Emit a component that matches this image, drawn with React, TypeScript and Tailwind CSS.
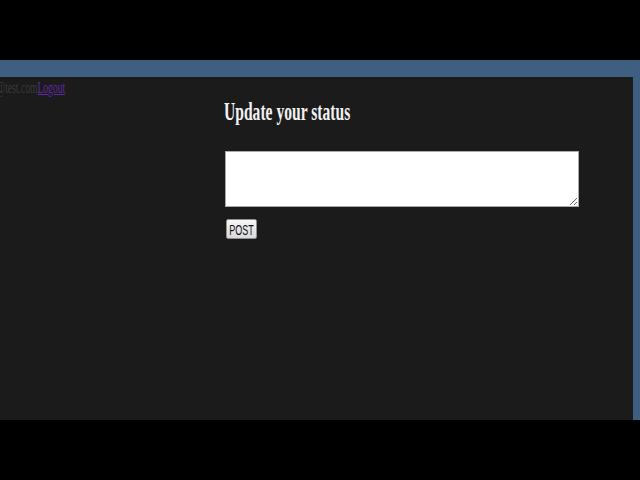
import React, { useState } from 'react';

// The page looks squeezed sideways, so text runs get scale-x-[0.6]
const App: React.FC = () => {
  const [status, setStatus] = useState('');

  return (
    <div className="w-[640px] h-[480px] bg-black flex flex-col overflow-hidden font-['Liberation_Serif',serif]">
      {/* top black band */}
      <div className="h-[60px] shrink-0" />

      {/* blue frame */}
      <div className="h-[360px] shrink-0 bg-[#3e5f80] pt-[17px] pr-[7px] flex">
        <div className="flex-1 bg-[#1b1b1b] pt-[2px] flex flex-col">
          {/* user line */}
          <div className="h-[18px] whitespace-nowrap overflow-hidden text-[16px] leading-[18px] text-[#3a3a3a]">
            <span className="inline-block origin-left scale-x-[0.6] -ml-[17px]">
              test@test.com
              <a href="#" className="text-[#5e2aa0] underline">Logout</a>
            </span>
          </div>

          {/* status form */}
          <div className="pl-[224px] flex flex-col items-start">
            <h2 className="text-[26px] leading-[30px] font-bold text-[#f2f2f2] whitespace-nowrap">
              <span className="inline-block origin-left scale-x-[0.6]">Update your status</span>
            </h2>
            <textarea
              value={status}
              onChange={(e) => setStatus(e.target.value)}
              className="mt-[24px] ml-[1px] w-[354px] h-[56px] bg-white border border-[#a9a9a9] outline-none"
            />
            <button
              type="button"
              className="mt-[12px] ml-[2px] w-[31px] h-[20px] flex items-center justify-center bg-gradient-to-b from-[#f7f7f7] to-[#d9d9d9] border border-[#8f8f8f] rounded-[2px] text-[#111] font-['Liberation_Sans',sans-serif] text-[15px] leading-none"
            >
              <span className="inline-block scale-x-[0.6] whitespace-nowrap">POST</span>
            </button>
          </div>
        </div>
      </div>
    </div>
  );
};

export default App;
